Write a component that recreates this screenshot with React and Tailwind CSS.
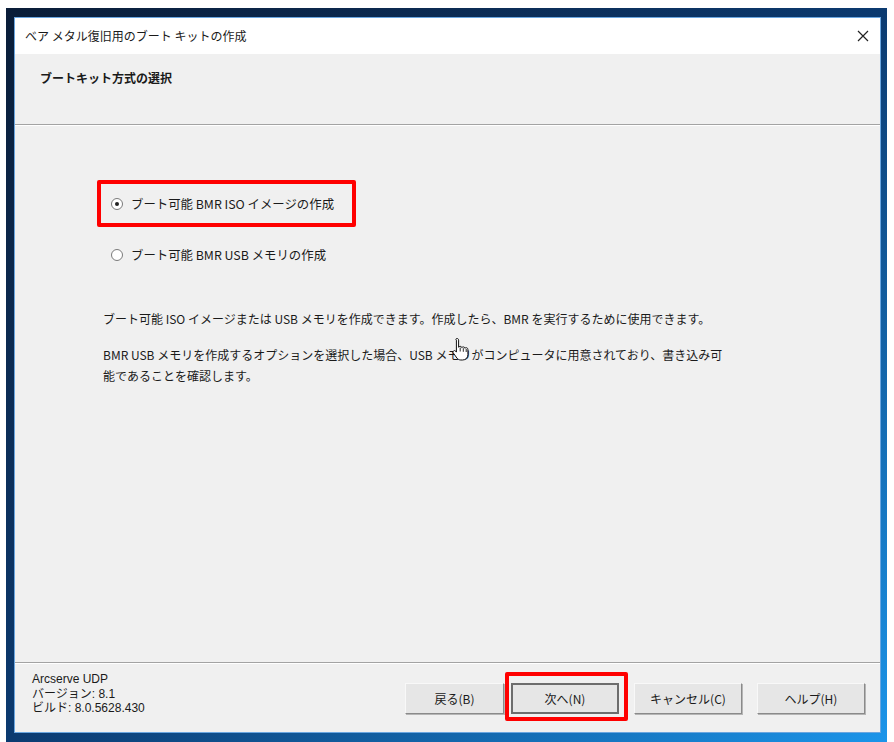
import React from "react";

const jp = "font-['Noto_Sans_CJK_JP','Noto_Sans',sans-serif]";

const Radio = ({ checked, label }) => (
  <div className="flex items-center h-[16px]">
    <span className="w-[12px] h-[12px] rounded-full border border-[#7a7a7a] bg-white flex items-center justify-center">
      {checked && <span className="w-[4px] h-[4px] rounded-full bg-[#222]" />}
    </span>
    <span className="ml-[8px] text-[12.4px] leading-[16px] text-[#1a1a1a]">{label}</span>
  </div>
);

const Button = ({ label, w = "w-[108px]", primary }) => (
  <button
    className={`${w} h-[31px] bg-[#e6e6e6] text-[12px] text-[#1a1a1a] flex items-center justify-center ${
      primary
        ? "border-2 border-[#6d6d6d]"
        : "border border-t-[#f8f8f8] border-l-[#f8f8f8] border-r-[#8a8a8a] border-b-[#8a8a8a] shadow-[1px_1px_0_#b5b5b5]"
    }`}
  >
    {label}
  </button>
);

const HandCursor = () => (
  <svg width="18" height="24" viewBox="0 0 18 24" className="absolute left-[437px] top-[211px]">
    <path
      d="M5 1.5c1 0 1.6.7 1.6 1.6v7.2c.3-.6.9-1 1.6-1 .9 0 1.5.6 1.6 1.4.3-.5.9-.8 1.5-.8.9 0 1.5.6 1.6 1.4.3-.4.8-.6 1.3-.6 1 0 1.7.8 1.7 1.8v5.2c0 3-2.3 5.3-5.3 5.3H8.8c-1.6 0-3-.8-3.9-2l-3.6-5c-.5-.7-.4-1.6.3-2.1.6-.5 1.5-.4 2 .2l.8 1V3.1C3.4 2.2 4 1.5 5 1.5z"
      fill="#fff"
      stroke="#111"
      strokeWidth="1"
    />
    <path d="M8.2 10.5v4M11.3 11.2v3.6M14.2 12v3" stroke="#111" strokeWidth="0.9" />
  </svg>
);

export default function App() {
  return (
    <div className={`w-[894px] h-[742px] bg-white pt-[8px] pl-[6px] pr-[7px] flex ${jp}`}>
      <div className="flex-1 flex bg-linear-to-br from-[#0a1d38] via-[#0b3a70] to-[#1b95ea] pt-[9px] pl-[8px] pr-[6px] pb-[9px]">
        <div className="flex-1 flex flex-col border border-[#6aa6e0] bg-[#f0f0f0]">
          {/* title bar */}
          <div className="h-[36px] bg-white flex items-center justify-between pl-[10px] pr-[11px]">
            <span className="text-[12px] text-[#1a1a1a]">ベア メタル復旧用のブート キットの作成</span>
            <svg width="12" height="12" viewBox="0 0 12 12">
              <path d="M1 1L11 11M11 1L1 11" stroke="#222" strokeWidth="1.2" />
            </svg>
          </div>

          {/* header */}
          <div className="h-[70px] pl-[25px] pt-[10px]">
            <span className="text-[12px] font-bold text-[#1a1a1a]">ブートキット方式の選択</span>
          </div>
          <div className="border-t border-[#a3a3a3] border-b border-b-white" />

          {/* body */}
          <div className="relative h-[536px] pt-[54px] pl-[82px] flex flex-col">
            <div className="h-[47px] pl-[14px] flex items-center">
              <Radio checked label="ブート可能 BMR ISO イメージの作成" />
            </div>
            <div className="mt-[20px] pl-[14px]">
              <Radio label="ブート可能 BMR USB メモリの作成" />
            </div>
            <p className="mt-[46px] ml-[6px] text-[12px] leading-[20px] text-[#1a1a1a]">
              ブート可能 ISO イメージまたは USB メモリを作成できます。作成したら、BMR を実行するために使用できます。
            </p>
            <p className="mt-[15px] ml-[6px] text-[12px] leading-[21px] text-[#1a1a1a]">
              BMR USB メモリを作成するオプションを選択した場合、USB メモリがコンピュータに用意されており、書き込み可
              <br />
              能であることを確認します。
            </p>

            {/* annotation */}
            <div className="absolute left-[82px] top-[54px] w-[259px] h-[47px] border-4 border-[#ff0000] rounded-[2px]" />
            <HandCursor />
          </div>
          <div className="border-t border-[#a3a3a3] border-b border-b-white" />

          {/* footer */}
          <div className="relative flex-1 flex items-start justify-between pl-[17px] pr-[15px]">
            <div className="pt-[8px] text-[12px] leading-[14.5px] text-[#1a1a1a] font-['Liberation_Sans','Noto_Sans_CJK_JP',sans-serif]">
              <div>Arcserve UDP</div>
              <div>バージョン: 8.1</div>
              <div>ビルド: 8.0.5628.430</div>
            </div>
            <div className="pt-[19px] flex">
              <Button label="戻る(B)" w="w-[99px]" />
              <div className="ml-[7px]">
                <Button label="次へ(N)" primary />
              </div>
              <div className="ml-[15px]">
                <Button label="キャンセル(C)" />
              </div>
              <div className="ml-[15px]">
                <Button label="ヘルプ(H)" />
              </div>
            </div>
            <div className="absolute left-[490px] top-[8px] w-[123px] h-[49px] border-4 border-[#ff0000] rounded-[2px]" />
          </div>
        </div>
      </div>
    </div>
  );
}
